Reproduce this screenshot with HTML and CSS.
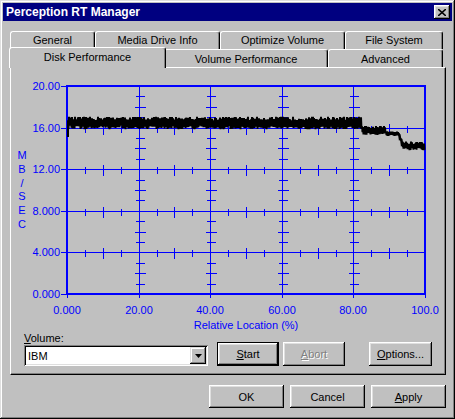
FILE: index.html
```html
<!DOCTYPE html>
<html lang="en">
<head>
  <meta charset="UTF-8">
  <title>Perception RT Manager</title>
  <link rel="stylesheet" href="styles.css">
</head>
<body>
  <div class="window">
    <div class="titlebar">
      <span class="title">Perception RT Manager</span>
      <button class="close-btn">
        <svg width="8" height="7" viewBox="0 0 8 7"><path d="M0 0 L8 7 M8 0 L0 7" stroke="#000" stroke-width="1.6"/></svg>
      </button>
    </div>

    <div class="tabs">
      <div class="tab-row">
        <div class="tab tab-general">General</div>
        <div class="tab tab-media">Media Drive Info</div>
        <div class="tab tab-optimize">Optimize Volume</div>
        <div class="tab tab-fs">File System</div>
      </div>
      <div class="tab-row">
        <div class="tab tab-disk selected">Disk Performance</div>
        <div class="tab tab-volume">Volume Performance</div>
        <div class="tab tab-advanced">Advanced</div>
      </div>
    </div>

    <div class="panel">
      <svg id="chart" class="chart" width="434" height="264" viewBox="11 68 434 264"></svg>

      <div class="volume-row">
        <div class="volume-field">
          <label class="field-label"><u>V</u>olume:</label>
          <div class="combo">
            <span class="combo-text">IBM</span>
            <span class="combo-btn"><svg width="7" height="4" viewBox="0 0 7 4"><path d="M0 0 H7 L3.5 4 Z" fill="#000"/></svg></span>
          </div>
        </div>
        <button class="btn btn-small btn-default"><u>S</u>tart</button>
        <button class="btn btn-small btn-abort" disabled><u>A</u>bort</button>
        <button class="btn btn-small btn-options"><u>O</u>ptions...</button>
      </div>
    </div>

    <div class="dialog-buttons">
      <button class="btn">OK</button>
      <button class="btn">Cancel</button>
      <button class="btn"><u>A</u>pply</button>
    </div>
  </div>

  <script>
    const NS = 'http://www.w3.org/2000/svg';
    const svg = document.getElementById('chart');
    const X0 = 67, X1 = 425, Y0 = 86, Y1 = 294;
    const BLUE = '#0000ff';

    const xAt = p => X0 + p * (X1 - X0) / 100;
    const yAt = v => Y1 - v * (Y1 - Y0) / 20;

    function add(tag, attrs, text) {
      const el = document.createElementNS(NS, tag);
      for (const k in attrs) el.setAttribute(k, attrs[k]);
      if (text) el.textContent = text;
      svg.appendChild(el);
      return el;
    }

    function line(x1, y1, x2, y2, w) {
      add('line', { x1, y1, x2, y2, stroke: BLUE, 'stroke-width': w || 1, 'shape-rendering': 'crispEdges' });
    }

    // rutnät och skalstreck
    for (let i = 0; i <= 5; i++) {
      const x = Math.round(xAt(i * 20)) + 0.5;
      const y = Math.round(yAt(i * 4)) + 0.5;
      line(x, Y1, x, Y1 + 4);
      line(X0 - 6, y, X0, y);
      if (i > 0 && i < 5) {
        line(x, Y0, x, Y1);
        line(X0, y, X1, y);
      }
    }

    for (let v = 1; v < 20; v++) {
      if (v % 4 === 0) continue;
      const y = Math.round(yAt(v)) + 0.5;
      const len = v % 2 === 0 ? 5 : 4;
      for (let i = 1; i <= 4; i++) {
        const x = Math.round(xAt(i * 20)) + 0.5;
        line(x - len, y, x + len + 1, y);
      }
    }

    for (let p = 5; p < 100; p += 5) {
      if (p % 20 === 0) continue;
      const x = Math.round(xAt(p)) + 0.5;
      const len = p % 10 === 0 ? 5 : 3;
      for (let i = 1; i <= 4; i++) {
        const y = Math.round(yAt(i * 4)) + 0.5;
        line(x, y - len, x, y + len + 1);
      }
    }

    // ram
    line(X0, Y0 - 1, X0, Y1 + 1, 2);
    line(X0 - 1, Y0, X1 + 1, Y0, 2);
    line(X1, Y0 - 1, X1, Y1 + 1, 2);
    line(X0 - 1, Y1, X1 + 1, Y1, 2);

    // etiketter
    const yLabels = ['0.000', '4.000', '8.000', '12.00', '16.00', '20.00'];
    const xLabels = ['0.000', '20.00', '40.00', '60.00', '80.00', '100.0'];
    yLabels.forEach((t, i) => add('text', { x: 60, y: Math.round(yAt(i * 4)) + 4, 'text-anchor': 'end', class: 'axis-text' }, t));
    xLabels.forEach((t, i) => add('text', { x: Math.round(xAt(i * 20)), y: 314, 'text-anchor': 'middle', class: 'axis-text' }, t));
    add('text', { x: 246, y: 329, 'text-anchor': 'middle', class: 'axis-text' }, 'Relative Location (%)');
    ['M', 'B', '/', 'S', 'E', 'C'].forEach((t, i) => add('text', { x: 22, y: 159 + i * 13.8, 'text-anchor': 'middle', class: 'axis-text' }, t));

    // mätdata
    let seed = 12345;
    const rnd = () => (seed = (seed * 16807) % 2147483647) / 2147483647;
    const pts = [[68, 124], [68, 137], [68, 123]];
    for (let x = 68; x <= 424; x++) {
      let c, a, b;
      if (x < 362) { c = 123; a = 2.5; b = 3.8; }
      else if (x < 386) { c = 130.5; a = 1.5; b = 3; }
      else if (x < 398) { c = 133.5; a = 1; b = 1.5; }
      else if (x < 403) { c = 133.5 + (x - 398) * 2.5; a = 1; b = 1.5; }
      else { c = 146; a = 1.5; b = 3; }
      pts.push([x, c - a - b * rnd()]);
      pts.push([x + 0.5, c + a + b * rnd()]);
    }
    add('polyline', { points: pts.map(p => p.join(',')).join(' '), fill: 'none', stroke: '#000', 'stroke-width': 2 });
  </script>
</body>
</html>
```

FILE: styles.css
```css
body {
  margin: 0;
  font-family: "Liberation Sans", Arial, sans-serif;
  font-size: 11px;
  background: #c0c0c0;
}
.window {
  width: 455px;
  height: 419px;
  box-sizing: border-box;
  padding: 3px;
  background: #c0c0c0;
  box-shadow: inset -1px -1px #000, inset 1px 1px #dfdfdf, inset -2px -2px #808080, inset 2px 2px #fff;
}
.titlebar {
  height: 18px;
  background: #000080;
  color: #fff;
  display: flex;
  align-items: center;
  justify-content: space-between;
  padding-left: 3px;
}
.title {
  font-weight: bold;
  font-size: 12px;
}
.close-btn {
  width: 16px;
  height: 14px;
  margin-right: 2px;
  padding: 0;
  border: 0;
  background: #c0c0c0;
  display: flex;
  align-items: center;
  justify-content: center;
  box-shadow: inset -1px -1px #000, inset 1px 1px #fff, inset -2px -2px #808080, inset 2px 2px #dfdfdf;
}
.tabs {
  margin: 10px 0 0 7px;
}
.tab-row {
  display: flex;
  height: 18px;
  align-items: flex-start;
}
.tab {
  height: 18px;
  box-sizing: border-box;
  background: #c0c0c0;
  border-top: 1px solid #fff;
  border-left: 1px solid #fff;
  border-right: 1px solid #000;
  border-radius: 3px 3px 0 0;
  box-shadow: inset -1px 0 #808080;
  text-align: center;
  line-height: 17px;
}
.tab-general { width: 85px; }
.tab-media { width: 125px; }
.tab-optimize { width: 125px; }
.tab-fs { width: 98px; }
.tab-disk { width: 157px; }
.tab-volume { width: 164px; line-height: 19px; }
.tab-advanced { width: 115px; line-height: 19px; }
.tab.selected {
  position: relative;
  z-index: 1;
  height: 21px;
  margin: -2px -2px 0 -1px;
  line-height: 18px;
}
.panel {
  width: 436px;
  height: 308px;
  box-sizing: border-box;
  margin-left: 7px;
  border-top: 1px solid #fff;
  border-left: 1px solid #fff;
  border-right: 1px solid #000;
  border-bottom: 1px solid #000;
  box-shadow: inset -1px -1px #808080;
}
.chart {
  display: block;
}
.axis-text {
  font-family: "Liberation Sans", Arial, sans-serif;
  font-size: 11px;
  fill: #0000ff;
}
.volume-row {
  display: flex;
  align-items: flex-end;
  padding-left: 13px;
}
.field-label {
  display: block;
  line-height: 13px;
}
.combo {
  width: 184px;
  height: 21px;
  box-sizing: border-box;
  background: #fff;
  display: flex;
  align-items: center;
  justify-content: space-between;
  padding: 2px;
  box-shadow: inset 1px 1px #808080, inset -1px -1px #fff, inset 2px 2px #000, inset -2px -2px #dfdfdf;
}
.combo-text {
  padding-left: 2px;
}
.combo-btn {
  width: 16px;
  height: 17px;
  background: #c0c0c0;
  display: flex;
  align-items: center;
  justify-content: center;
  box-shadow: inset -1px -1px #000, inset 1px 1px #dfdfdf, inset -2px -2px #808080, inset 2px 2px #fff;
}
.btn {
  width: 75px;
  height: 23px;
  box-sizing: border-box;
  padding: 0;
  border: 0;
  background: #c0c0c0;
  color: #000;
  font-family: "Liberation Sans", Arial, sans-serif;
  font-size: 11px;
  box-shadow: inset -1px -1px #000, inset 1px 1px #fff, inset -2px -2px #808080, inset 2px 2px #dfdfdf;
}
.btn-small {
  width: 62px;
  height: 24px;
  margin-left: 4px;
}
.btn-default {
  margin-left: 9px;
  border: 1px solid #000;
}
.btn-abort {
  color: #808080;
  text-shadow: 1px 1px #fff;
}
.btn-options {
  width: 63px;
  margin-left: 24px;
}
.dialog-buttons {
  display: flex;
  justify-content: flex-end;
  gap: 6px;
  margin-top: 10px;
  padding-right: 6px;
}
```
